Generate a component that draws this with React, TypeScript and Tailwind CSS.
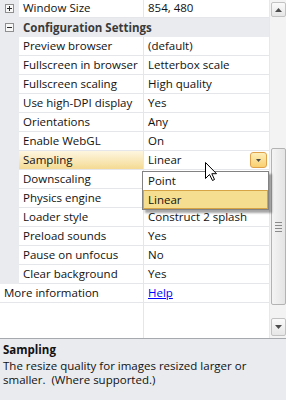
import React from "react";

const FONT = { fontFamily: '"Segoe UI", "Open Sans", "Noto Sans", sans-serif' };

function PlusMinus({ plus }: { plus: boolean }) {
  return (
    <svg width="9" height="9" viewBox="0 0 9 9" className="block">
      <rect x="0.5" y="0.5" width="8" height="8" fill="#f7f7f7" stroke="#8f8f8f" />
      <line x1="2" y1="4.5" x2="7" y2="4.5" stroke="#2b2b2b" />
      {plus && <line x1="4.5" y1="2" x2="4.5" y2="7" stroke="#2b2b2b" />}
    </svg>
  );
}

function Row({
  name,
  value,
  icon,
  selected,
  children,
}: {
  name: string;
  value?: React.ReactNode;
  icon?: React.ReactNode;
  selected?: boolean;
  children?: React.ReactNode;
}) {
  return (
    <div className="flex h-[19px]">
      <div className="w-[19px] shrink-0 bg-[#e9ebef] flex items-center justify-center">{icon}</div>
      <div className="flex flex-1 border-b border-[#e4e6ea]">
        <div
          className={
            "w-[125px] shrink-0 border-r border-[#e4e6ea] pl-[4px] flex items-center text-[#111] whitespace-nowrap " +
            (selected ? "bg-gradient-to-b from-[#fdf6e0] to-[#f4da92]" : "bg-white")
          }
        >
          {name}
        </div>
        <div className="flex-1 pl-[4px] flex items-center text-[#111] relative whitespace-nowrap">
          {value}
          {children}
        </div>
      </div>
    </div>
  );
}

export default function App() {
  const rows: [string, string][] = [
    ["Preview browser", "(default)"],
    ["Fullscreen in browser", "Letterbox scale"],
    ["Fullscreen scaling", "High quality"],
    ["Use high-DPI display", "Yes"],
    ["Orientations", "Any"],
    ["Enable WebGL", "On"],
  ];
  const rows2: [string, string][] = [
    ["Downscaling", ""],
    ["Physics engine", ""],
    ["Loader style", "Construct 2 splash"],
    ["Preload sounds", "Yes"],
    ["Pause on unfocus", "No"],
    ["Clear background", "Yes"],
  ];
  return (
    <div className="w-[286px] h-[400px] bg-white overflow-hidden relative text-[11.5px] leading-none" style={FONT}>
      <div className="flex h-[338px]">
        {/* grid */}
        <div className="w-[269px] h-full overflow-hidden">
          <div className="-mt-[1px]">
            <Row name="Window Size" value="854, 480" icon={<PlusMinus plus />} />
            <div className="flex h-[19px] bg-[#e9ebef]">
              <div className="w-[19px] shrink-0 flex items-center justify-center">
                <PlusMinus plus={false} />
              </div>
              <div className="pl-[4px] flex items-center font-bold text-[#3a3a3a] whitespace-nowrap">
                Configuration Settings
              </div>
            </div>
            {rows.map(([n, v]) => (
              <Row key={n} name={n} value={v} />
            ))}
            <Row name="Sampling" value="Linear" selected>
              <div className="absolute left-[106px] top-[1px] w-[17px] h-[16px] rounded-[3px] border border-[#dfa24a] bg-gradient-to-b from-[#fdeeb8] to-[#f9d070] flex items-center justify-center">
                <svg width="5" height="3" viewBox="0 0 5 3">
                  <path d="M0 0 H5 L2.5 3 Z" fill="#4a4a4a" />
                </svg>
              </div>
            </Row>
            {rows2.map(([n, v]) => (
              <Row key={n} name={n} value={v} />
            ))}
            <div className="flex h-[19px] border-b border-[#e4e6ea]">
              <div className="w-[144px] shrink-0 border-r border-[#e4e6ea] pl-[4px] flex items-center text-[#111]">
                More information
              </div>
              <div className="flex-1 pl-[4px] flex items-center">
                <span className="text-[#0000ff] underline">Help</span>
              </div>
            </div>
            <div className="flex h-[40px]">
              <div className="w-[144px] shrink-0 border-r border-[#e4e6ea]" />
            </div>
          </div>
        </div>
        {/* scrollbar */}
        <div className="w-[17px] h-full bg-[#f3f3f3] border-l border-[#e8e8e8] flex flex-col items-center pt-[2px] pb-[2px]">
          <div className="w-[15px] h-[15px] rounded-[2px] border border-[#c2c2c2] bg-gradient-to-b from-[#fafafa] to-[#e6e6e6] flex items-center justify-center">
            <svg width="7" height="4" viewBox="0 0 7 4">
              <path d="M0 4 H7 L3.5 0 Z" fill="#4d4d4d" />
            </svg>
          </div>
          <div className="h-[131px]" />
          <div className="w-[15px] h-[157px] rounded-[2px] border border-[#b3b3b3] bg-gradient-to-r from-[#f4f4f4] to-[#e4e4e4] flex items-center justify-center">
            <div className="flex flex-col gap-[2px]">
              <div className="w-[7px] h-px bg-[#8a8a8a]" />
              <div className="w-[7px] h-px bg-[#8a8a8a]" />
              <div className="w-[7px] h-px bg-[#8a8a8a]" />
              <div className="w-[7px] h-px bg-[#8a8a8a]" />
            </div>
          </div>
          <div className="flex-1" />
          <div className="w-[15px] h-[18px] rounded-[2px] border border-[#c2c2c2] bg-gradient-to-b from-[#fafafa] to-[#e6e6e6] flex items-center justify-center">
            <svg width="7" height="4" viewBox="0 0 7 4">
              <path d="M0 0 H7 L3.5 4 Z" fill="#4d4d4d" />
            </svg>
          </div>
        </div>
      </div>
      <div className="h-px bg-[#a6a9ad]" />
      <div className="bg-[#e9ebef] h-[61px] pl-[3px] pt-[4px] text-[#111] leading-[14px]">
        <div className="font-bold">Sampling</div>
        <div className="whitespace-pre mt-[2px]">The resize quality for images resized larger or</div>
        <div className="whitespace-pre">smaller.  (Where supported.)</div>
      </div>

      {/* dropdown list */}
      <div className="absolute left-[142px] top-[171px] w-[127px] h-[39px] bg-white border border-[#828282] shadow-[3px_3px_2px_rgba(0,0,0,0.35)] flex flex-col">
        <div className="h-[18px] pl-[5px] flex items-center text-[#111]">Point</div>
        <div className="h-[19px] pl-[4px] flex items-center bg-[#f6de90] border border-[#d7a445] text-[#111]">
          Linear
        </div>
      </div>

      {/* cursor */}
      <svg className="absolute left-[205px] top-[162px]" width="13" height="20" viewBox="0 0 13 20">
        <path
          d="M0.5 0.5 L0.5 16.5 L4.5 12.5 L7.5 18.5 L9.5 17.5 L6.8 11.7 L11.5 11.7 Z"
          fill="#fff"
          stroke="#000"
          strokeWidth="1"
          strokeLinejoin="miter"
        />
      </svg>
    </div>
  );
}
